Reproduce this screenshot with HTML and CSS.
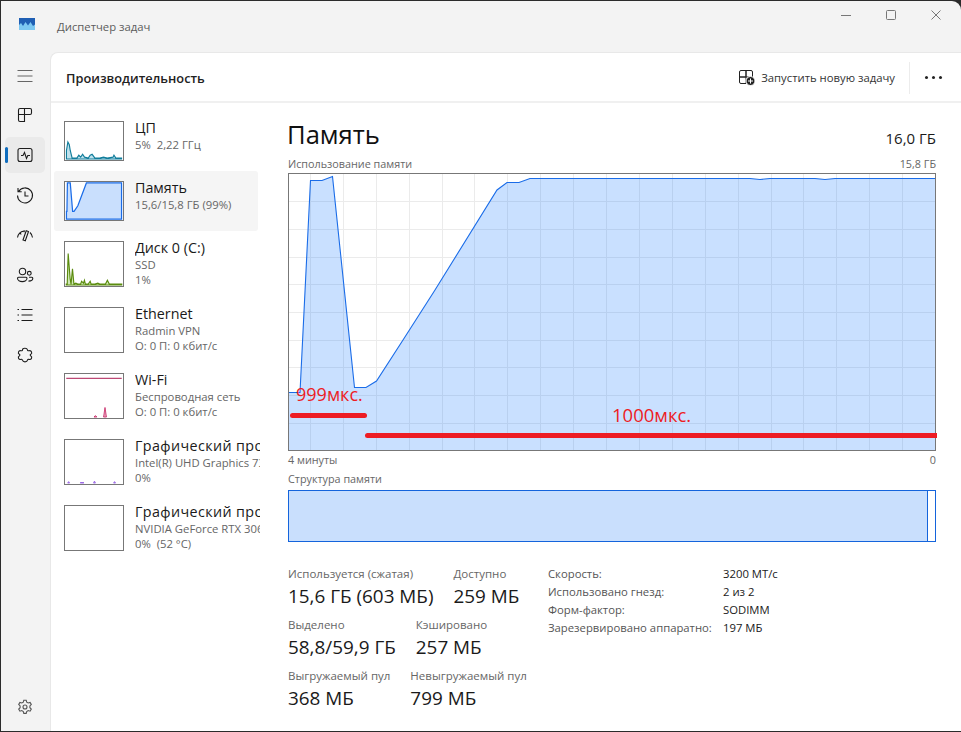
FILE: index.html
```html
<!DOCTYPE html>
<html lang="ru">
<head>
    <meta charset="UTF-8">
    <meta name="viewport" content="width=device-width, initial-scale=1.0">
    <title>Диспетчер задач</title>
    <link rel="stylesheet" href="styles.css">
</head>
<body>
    <div class="window">
        <div class="titlebar">
            <svg class="logo" width="16" height="12" viewBox="0 0 16 12">
                <rect width="16" height="12" fill="#7cc8f2"/>
                <path d="M0 0h16v6.500l-2 1.500-2.500-4-2.500 3.500L6.500 4 4 8 2 5 0 7z" fill="#1f5fb4"/>
            </svg>
            <span class="app-name">Диспетчер задач</span>
            <div class="controls">
                <svg width="12" height="12" viewBox="0 0 12 12"><path d="M1 6.500h10"/></svg>
                <svg width="12" height="12" viewBox="0 0 12 12"><rect x="1.500" y="1.500" width="9" height="9" rx="1"/></svg>
                <svg width="12" height="12" viewBox="0 0 12 12"><path d="M1.500 1.500l9 9M10.500 1.500l-9 9"/></svg>
            </div>
        </div>
        <div class="app">
            <nav class="nav">
                <button class="nav-btn nav-menu"><svg width="20" height="20" viewBox="0 0 20 20"><path d="M2.500 4.500h15M2.500 10h15M2.500 15.500h15"/></svg></button>
                <button class="nav-btn"><svg width="20" height="20" viewBox="0 0 20 20"><path d="M5 3.500h4.500v6h-6V5A1.500 1.500 0 0 1 5 3.500zM9.500 3.500H15A1.500 1.500 0 0 1 16.500 5v3a1.500 1.500 0 0 1-1.500 1.500H9.500zM3.500 9.500h6v7H5A1.500 1.500 0 0 1 3.500 15z"/></svg></button>
                <button class="nav-btn active"><svg width="20" height="20" viewBox="0 0 20 20"><rect x="3" y="3.500" width="14" height="13" rx="2"/><path d="M6 10.500h2l1.500-3 2 6 1.300-3H15"/></svg></button>
                <button class="nav-btn"><svg width="20" height="20" viewBox="0 0 20 20"><path d="M3.600 6.500A7.500 7.500 0 1 1 2.500 10.500M3 3v3.700h3.700M10 6.500v4.500h3.500"/></svg></button>
                <button class="nav-btn"><svg width="20" height="20" viewBox="0 0 20 20"><path d="M2.500 12.500A8 8 0 0 1 9 6M4.800 7.500l1.400 2M9.200 5.200v2M15 7.500a8 8 0 0 1 2.500 5M13.500 6.500l-3.200 9.300-2.300-.8 3.200-9.300z"/></svg></button>
                <button class="nav-btn"><svg width="20" height="20" viewBox="0 0 20 20"><circle cx="7.500" cy="6.500" r="3.200"/><circle cx="14.300" cy="8.300" r="1.900"/><path d="M3.500 12.300h7.500a1 1 0 0 1 1 1c0 2-2.300 3.300-4.700 3.300s-4.800-1.300-4.800-3.300a1 1 0 0 1 1-1zM14 12.300h2.800a1 1 0 0 1 1 1c0 1.600-1.700 2.800-4.300 2.800"/></svg></button>
                <button class="nav-btn"><svg width="20" height="20" viewBox="0 0 20 20"><path d="M6.500 4.500h11M6.500 10h11M6.500 15.500h11M2.500 4.500h1.500M2.500 10h1.500M2.500 15.500h1.500"/></svg></button>
                <button class="nav-btn"><svg width="20" height="20" viewBox="0 0 20 20"><path d="M7.500 5c0-2.200 4.500-2.500 5 0 .2.800 1 .9 1.600.7 2.400-.6 3.500 2.700 1.700 3.500-.8.400-.8 1.300 0 1.700 1.800.9.700 4-1.700 3.500-.7-.2-1.400 0-1.600.7-.5 2.300-4.500 2.300-5 0-.2-.7-.9-.9-1.600-.7-2.300.5-3.500-2.600-1.600-3.500.8-.4.800-1.300 0-1.700-1.900-.9-.7-4.100 1.600-3.500.7.200 1.600-.1 1.600-.7z"/></svg></button>
                <button class="nav-btn nav-settings"><svg width="20" height="20" viewBox="0 0 20 20"><circle cx="10" cy="10" r="2"/><path d="M8.800 3.200h2.400l.5 1.900 1.500.9 1.900-.6 1.200 2.100-1.400 1.400v1.800l1.400 1.400-1.200 2.100-1.900-.6-1.500.9-.5 1.900H8.800l-.5-1.900-1.500-.9-1.900.6-1.200-2.100 1.400-1.400V8.900L3.700 7.500l1.200-2.100 1.900.6 1.500-.9z"/></svg></button>
            </nav>
            <div class="content">
                <header class="head">
                    <h1 class="head-title">Производительность</h1>
                    <div class="head-actions">
                        <svg class="run-icon" width="16" height="16" viewBox="0 0 16 16">
                            <path d="M2 .5h5v6.500H.5V2A1.500 1.500 0 0 1 2 .5zM7 .5h5A1.500 1.500 0 0 1 13.500 2v5H7zM.5 7H7v6.500H2A1.500 1.500 0 0 1 .5 12z"/>
                            <circle class="run-dot" cx="11.500" cy="11" r="4.500"/>
                            <path class="run-plus" d="M11.500 8.500v5M9 11h5"/>
                        </svg>
                        <span class="run-label">Запустить новую задачу</span>
                        <span class="head-divider"></span>
                        <span class="dots"><i></i><i></i><i></i></span>
                    </div>
                </header>
                <div class="perf">
                    <ul class="devices">
                        <li class="device device-short">
                            <svg class="thumb" viewBox="0 0 60 40">
                                <path class="cpu-line" d="M1 39V30L2.500 21 4 24 5 30 7 38 12 38 14 35 16 37 18 34 20 37 24 38 26 35 28 34 31 38 36 38 40 37 44 38 50 37 51 35 53 38 59 38V39z"/>
                            </svg>
                            <div class="device-text">
                                <div class="device-name">ЦП</div>
                                <div class="device-sub">5%&nbsp; 2,22 ГГц</div>
                            </div>
                        </li>
                        <li class="device device-short selected">
                            <svg class="thumb" viewBox="0 0 60 40">
                                <path class="mem-line" d="M1 39V31H1.500L2 1H5L7.500 31H9L13 25 22 1H59V39z"/>
                            </svg>
                            <div class="device-text">
                                <div class="device-name">Память</div>
                                <div class="device-sub">15,6/15,8 ГБ (99%)</div>
                            </div>
                        </li>
                        <li class="device">
                            <svg class="thumb" viewBox="0 0 60 46">
                                <path class="disk-line" d="M1 45V44L2 44 3 12 5 38 6 44 7.500 28 9 44 11 43 13 44 16 44 17 41 19 43 20 40 21 44 24 44 26 41 27 44 31 44 34 43 36 44 42 44 44 40 46 44 59 44V45z"/>
                            </svg>
                            <div class="device-text">
                                <div class="device-name">Диск 0 (C:)</div>
                                <div class="device-sub">SSD</div>
                                <div class="device-sub">1%</div>
                            </div>
                        </li>
                        <li class="device">
                            <svg class="thumb" viewBox="0 0 60 46"></svg>
                            <div class="device-text">
                                <div class="device-name">Ethernet</div>
                                <div class="device-sub">Radmin VPN</div>
                                <div class="device-sub">О: 0 П: 0 кбит/с</div>
                            </div>
                        </li>
                        <li class="device">
                            <svg class="thumb" viewBox="0 0 60 46">
                                <path class="wifi-top" d="M1 4.500H59"/>
                                <path class="wifi-line" d="M30 45L31.500 43.500 33 45zM40 45L41.500 35 43 45z"/>
                            </svg>
                            <div class="device-text">
                                <div class="device-name">Wi-Fi</div>
                                <div class="device-sub">Беспроводная сеть</div>
                                <div class="device-sub">О: 0 П: 0 кбит/с</div>
                            </div>
                        </li>
                        <li class="device">
                            <svg class="thumb" viewBox="0 0 60 46">
                                <path class="gpu-line" d="M2.500 45L3.500 43.500 4.500 45zM15.500 45L16.500 44 17.500 45 18.500 44 19.500 45zM29.500 45L30.500 43 31.500 45zM50.500 45L51.500 43.500 52.500 45z"/>
                            </svg>
                            <div class="device-text">
                                <div class="device-name device-name-long">Графический процессор 0</div>
                                <div class="device-sub">Intel(R) UHD Graphics 730</div>
                                <div class="device-sub">0%</div>
                            </div>
                        </li>
                        <li class="device">
                            <svg class="thumb" viewBox="0 0 60 46"></svg>
                            <div class="device-text">
                                <div class="device-name device-name-long">Графический процессор 1</div>
                                <div class="device-sub">NVIDIA GeForce RTX 3060</div>
                                <div class="device-sub">0%&nbsp; (52 °C)</div>
                            </div>
                        </li>
                    </ul>
                    <main class="detail">
                        <div class="detail-title">
                            <h2>Память</h2>
                            <span>16,0 ГБ</span>
                        </div>
                        <div class="caption caption-top">
                            <span>Использование памяти</span>
                            <span>15,8 ГБ</span>
                        </div>
                        <div class="chart">
                            <svg width="648" height="278" viewBox="288 173 648 278">
                                <path class="chart-grid" d="M310.500 173V450M343.500 173V450M376.500 173V450M409.500 173V450M442.500 173V450M474.500 173V450M507.500 173V450M540.500 173V450M573.500 173V450M606.500 173V450M639.500 173V450M672.500 173V450M705.500 173V450M738.500 173V450M771.500 173V450M803.500 173V450M836.500 173V450M869.500 173V450M902.500 173V450M288 201.500H936M288 229.500H936M288 257.500H936M288 284.500H936M288 312.500H936M288 340.500H936M288 367.500H936M288 395.500H936M288 423.500H936"/>
                                <path class="chart-fill" d="M288.500 392.500H300L310.500 180.500H322L332.500 176.500 354.500 387.500H366L376.500 381 403 340 435 290 497 190 507 182.500H519L530 178.500H750L760 179.500 770 178.500H815L825 179.500 835 178.500H935.500V450H288.500z"/>
                                <path class="chart-line" d="M288.500 392.500H300L310.500 180.500H322L332.500 176.500 354.500 387.500H366L376.500 381 403 340 435 290 497 190 507 182.500H519L530 178.500H750L760 179.500 770 178.500H815L825 179.500 835 178.500H935.500"/>
                                <rect class="chart-frame" x="288.500" y="173.500" width="647" height="277"/>
                            </svg>
                            <span class="mark mark-short"></span>
                            <span class="mark mark-long"></span>
                            <span class="mark-label mark-label-short">999мкс.</span>
                            <span class="mark-label mark-label-long">1000мкс.</span>
                        </div>
                        <div class="caption caption-axis">
                            <span>4 минуты</span>
                            <span>0</span>
                        </div>
                        <div class="caption caption-struct">
                            <span>Структура памяти</span>
                        </div>
                        <div class="struct">
                            <div class="struct-used"></div>
                            <div class="struct-free"></div>
                        </div>
                        <div class="stats">
                            <div class="stats-left">
                                <div class="stat-row">
                                    <div class="stat"><div class="stat-label">Используется (сжатая)</div><div class="stat-value">15,6 ГБ (603 МБ)</div></div>
                                    <div class="stat"><div class="stat-label">Доступно</div><div class="stat-value">259 МБ</div></div>
                                </div>
                                <div class="stat-row">
                                    <div class="stat"><div class="stat-label">Выделено</div><div class="stat-value">58,8/59,9 ГБ</div></div>
                                    <div class="stat"><div class="stat-label">Кэшировано</div><div class="stat-value">257 МБ</div></div>
                                </div>
                                <div class="stat-row">
                                    <div class="stat"><div class="stat-label">Выгружаемый пул</div><div class="stat-value">368 МБ</div></div>
                                    <div class="stat"><div class="stat-label">Невыгружаемый пул</div><div class="stat-value">799 МБ</div></div>
                                </div>
                            </div>
                            <dl class="specs">
                                <dt>Скорость:</dt><dd>3200 МТ/с</dd>
                                <dt>Использовано гнезд:</dt><dd>2 из 2</dd>
                                <dt>Форм-фактор:</dt><dd>SODIMM</dd>
                                <dt>Зарезервировано аппаратно:</dt><dd>197 МБ</dd>
                            </dl>
                        </div>
                    </main>
                </div>
            </div>
        </div>
    </div>
</body>
</html>
```

FILE: styles.css
```css
* { box-sizing: border-box; }
html, body { margin: 0; height: 100%; overflow: hidden; }
body { background: #2b2b2b; font-family: "Open Sans", "Noto Sans", sans-serif; color: #1a1a1a; }
h1, h2, ul, dl, dd { margin: 0; padding: 0; }
svg { display: block; }

.window { display: flex; flex-direction: column; height: 730px; margin: 1px 0 0 1px; background: #f3f3f3; border-radius: 0 9px 0 0; overflow: hidden; }

.titlebar { display: flex; align-items: center; height: 51px; padding: 0 0 0 18px; flex-shrink: 0; }
.logo { margin-top: -5px; }
.app-name { margin-left: 22px; margin-top: -1px; font-size: 11.3px; color: #5c5c5c; }
.controls { display: flex; gap: 33px; margin-left: auto; margin-right: 19px; margin-top: -24px; }
.controls svg { fill: none; stroke: #777; stroke-width: 1; }

.app { display: flex; flex: 1; min-height: 0; }

.nav { display: flex; flex-direction: column; align-items: flex-start; width: 49px; flex-shrink: 0; padding: 6px 0 6px 4px; gap: 4px; }
.nav-btn { display: flex; align-items: center; justify-content: center; width: 40px; height: 36px; padding: 0; border: 0; background: none; border-radius: 5px; position: relative; }
.nav-btn svg { fill: none; stroke: #1c1c1c; stroke-width: 1.1; }
.nav-menu { margin-bottom: -1px; }
.nav-menu svg { stroke: #666; }
.nav-settings { margin-top: auto; }
.nav-settings svg { stroke: #555; }
.nav-btn.active { background: #eaeaea; }
.nav-btn.active::before { content: ""; position: absolute; left: 0; top: 10px; width: 3px; height: 16px; border-radius: 2px; background: #0f6cbd; }

.content { flex: 1; display: flex; flex-direction: column; min-width: 0; background: #fff; border-top-left-radius: 8px; border-top: 1px solid #e8e8e8; border-left: 1px solid #e8e8e8; }

.head { display: flex; align-items: center; justify-content: space-between; height: 50px; flex-shrink: 0; padding: 1px 19px 0 15px; border-bottom: 2px solid #f0f0f0; }
.head-title { font-size: 12.8px; font-weight: 600; color: #222; }
.head-actions { display: flex; align-items: center; }
.run-icon { fill: none; stroke: #222; stroke-width: 1; }
.run-dot { fill: #222; stroke: #fff; }
.run-plus { stroke: #fff; }
.run-label { margin-left: 6px; font-size: 11.3px; color: #333; }
.head-divider { width: 1px; height: 32px; margin: 0 15px 0 14px; background: #ececec; }
.dots { display: flex; gap: 4px; }
.dots i { width: 3px; height: 3px; border-radius: 50%; background: #222; }

.perf { display: flex; flex: 1; min-height: 0; }

.devices { list-style: none; width: 210px; flex-shrink: 0; padding: 8px 0 0 3px; }
.device { display: flex; gap: 11px; width: 204px; height: 66px; padding: 10px 0 10px 10px; border-radius: 3px; }
.device-short { height: 60px; }
.device.selected { background: #f5f5f5; }
.thumb { width: 60px; height: 46px; flex-shrink: 0; border: 1px solid #777; background: #fff; }
.device-short .thumb { height: 40px; }
.device-text { width: 125px; flex-shrink: 0; margin-top: -2px; white-space: nowrap; overflow: hidden; }
.device-name { font-size: 14.3px; line-height: 18px; color: #1a1a1a; }
.device-name-long { letter-spacing: .4px; }
.device-sub { font-size: 11.3px; line-height: 15px; color: #666; }

.cpu-line { fill: #bfe1ec; stroke: #117d9b; stroke-width: 1.2; }
.mem-line { fill: #c9dffd; stroke: #1a6ce8; stroke-width: 1.3; }
.disk-line { fill: #cfe8b4; stroke: #5b8c0f; stroke-width: 1.2; }
.wifi-top { fill: none; stroke: #a80f4a; stroke-width: 1; }
.wifi-line { fill: #e9a8c0; stroke: #c2185b; stroke-width: .8; }
.gpu-line { fill: #d9c2f5; stroke: #8a4fe0; stroke-width: .8; }

.detail { flex: 1; min-width: 0; padding: 0 25px 0 27px; }
.detail-title { display: flex; align-items: baseline; justify-content: space-between; height: 42px; padding-top: 16px; }
.detail-title h2 { font-size: 25.6px; font-weight: 400; line-height: 32px; margin-left: -1px; color: #111; }
.detail-title span { font-size: 15px; color: #1a1a1a; }

.caption { display: flex; justify-content: space-between; font-size: 10.8px; line-height: 16px; color: #666; }
.caption-top { height: 18px; margin-top: 10px; padding-top: 1px; }
.caption-axis { margin-top: 1px; height: 16px; }
.caption-struct { margin-top: 3px; height: 16px; }

.chart { position: relative; width: 648px; height: 278px; }
.chart-grid { fill: none; stroke: #ebebeb; stroke-width: 1; shape-rendering: crispEdges; }
.chart-fill { fill: rgb(0, 110, 255); fill-opacity: .21; }
.chart-line { fill: none; stroke: #1a6ce8; stroke-width: 1.1; }
.chart-frame { fill: none; stroke: #777; stroke-width: 1; }

.mark { position: absolute; height: 5px; background: #ed1c24; border-radius: 3px; }
.mark-short { left: 2px; top: 240px; width: 77px; }
.mark-long { left: 77px; top: 260px; width: 572px; border-radius: 3px 0 0 3px; }
.mark-label { position: absolute; font-size: 18px; line-height: 22px; color: #ed1c24; }
.mark-label-short { left: 8px; top: 210px; }
.mark-label-long { left: 324px; top: 231px; font-size: 18.5px; }

.struct { display: flex; width: 648px; height: 52px; margin-top: 3px; border: 1px solid #1464dc; }
.struct-used { flex: 1; background: #c9dffd; border-right: 1px solid #1464dc; }
.struct-free { width: 7px; }

.stats { display: flex; margin-top: 24px; }
.stats-left { width: 260px; flex-shrink: 0; }
.stat-row { display: flex; gap: 20px; height: 51px; white-space: nowrap; }
.stat-label { font-size: 11.5px; line-height: 16px; color: #666; }
.stat-value { font-size: 18.9px; line-height: 28px; color: #1a1a1a; }

.specs { display: grid; grid-template-columns: 175px auto; grid-auto-rows: 18px; margin-top: -1px; font-size: 11.3px; line-height: 18px; color: #555; }
.specs dd { color: #1a1a1a; }
```
